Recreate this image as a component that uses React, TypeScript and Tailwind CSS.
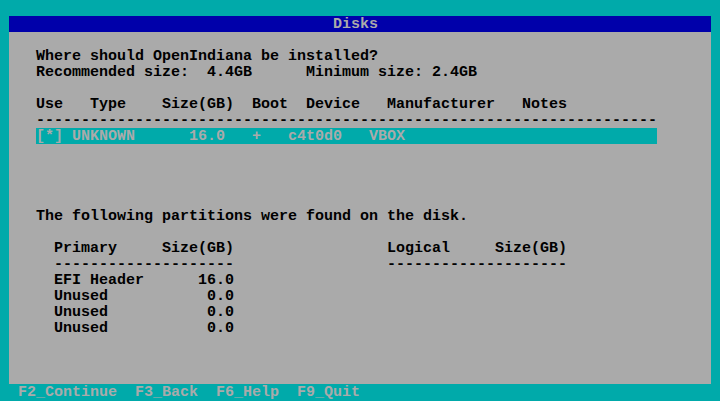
const dash = (n: number) => "-".repeat(n);

const Line = ({ text = "" }: { text?: string }) => (
    <div className="h-4 leading-[14px] pt-[2px] whitespace-pre">{text}</div>
);

export default function App() {
    return (
        <div
            className="w-[720px] h-[401px] bg-[#00aaaa] pt-4 flex flex-col overflow-hidden text-[15px] font-bold"
            style={{ fontFamily: '"Liberation Mono", "DejaVu Sans Mono", monospace' }}
        >
            <div className="mx-[9px] flex flex-col">
                <div className="h-4 leading-[14px] pt-[2px] bg-[#0000aa] text-[#aaaaaa] pl-[324px] whitespace-pre">Disks</div>
                <div className="h-[352px] bg-[#aaaaaa] text-black pl-[27px] flex flex-col">
                    <Line />
                    <Line text="Where should OpenIndiana be installed?" />
                    <Line text="Recommended size:  4.4GB      Minimum size: 2.4GB" />
                    <Line />
                    <Line text="Use   Type    Size(GB)  Boot  Device   Manufacturer   Notes" />
                    <Line text={dash(69)} />
                    <div className="h-4 leading-[14px] pt-[2px] whitespace-pre w-[621px] bg-[#00aaaa] text-[#aaaaaa]">
                        {"[*] UNKNOWN      16.0   +   c4t0d0   VBOX"}
                    </div>
                    <Line />
                    <Line />
                    <Line />
                    <Line />
                    <Line text="The following partitions were found on the disk." />
                    <Line />
                    <Line text="  Primary     Size(GB)                 Logical     Size(GB)" />
                    <Line text={"  " + dash(20) + " ".repeat(17) + dash(20)} />
                    <Line text="  EFI Header      16.0" />
                    <Line text="  Unused           0.0" />
                    <Line text="  Unused           0.0" />
                    <Line text="  Unused           0.0" />
                </div>
            </div>
            <div className="h-4 leading-[14px] pt-[2px] pl-[18px] text-[#aaaaaa] whitespace-pre">
                {"F2_Continue  F3_Back  F6_Help  F9_Quit"}
            </div>
        </div>
    );
}
